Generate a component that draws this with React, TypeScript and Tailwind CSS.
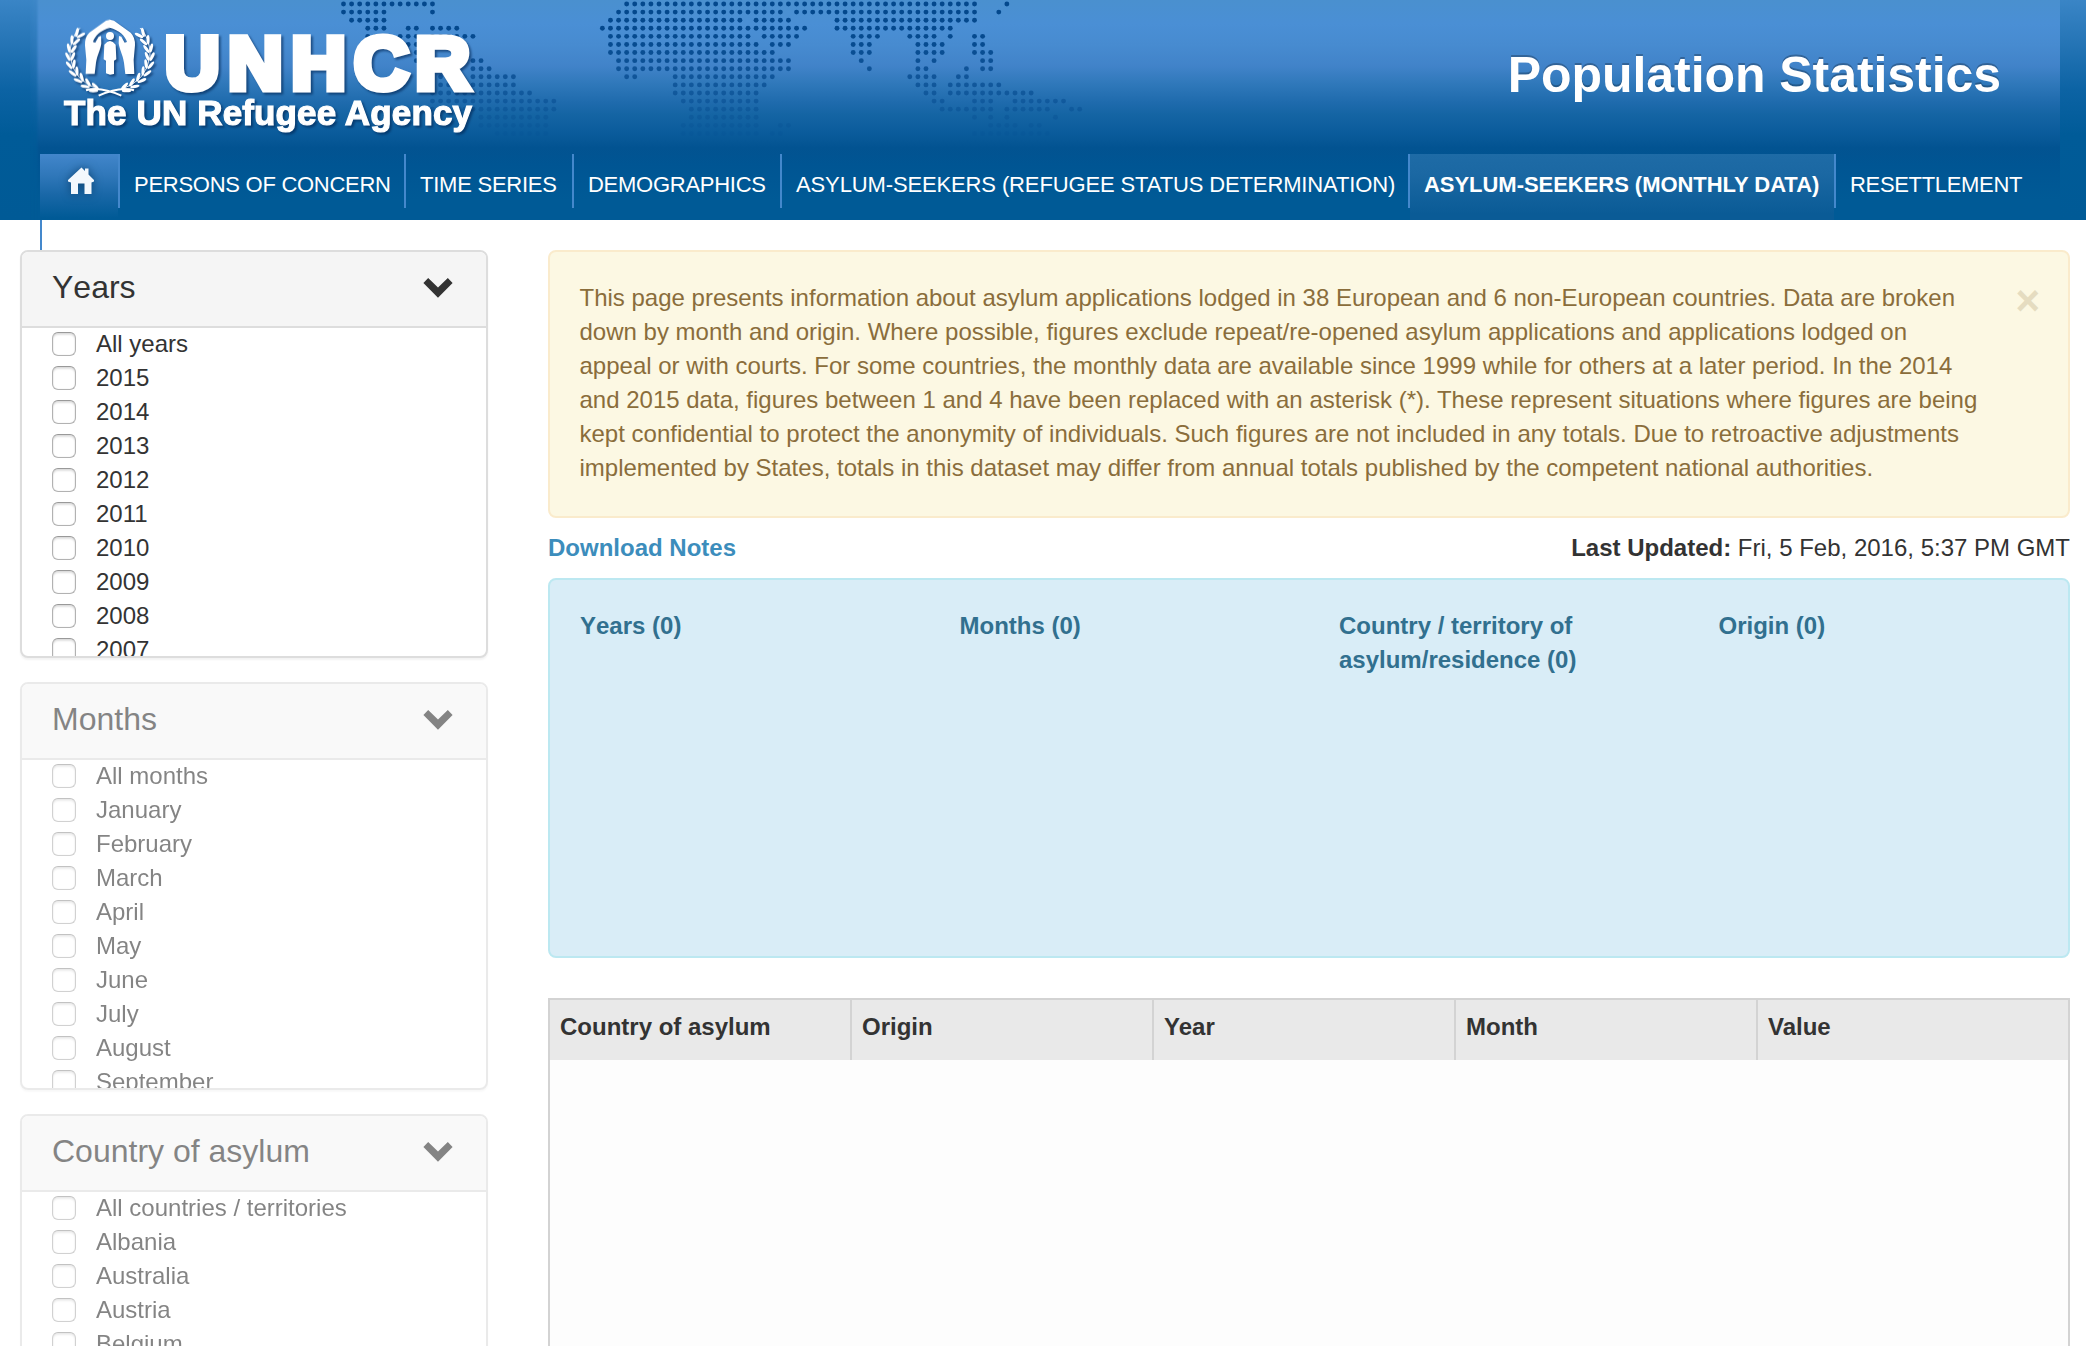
import React from "react";

const MAP_ROWS: number[][][] = [
  [[0, 11], [35, 78], [82, 82]],
  [[0, 5], [11, 11], [34, 54], [56, 78], [81, 81]],
  [[1, 5], [33, 49], [51, 55], [61, 78]],
  [[3, 5], [8, 9], [11, 14], [32, 57], [61, 75]],
  [[3, 4], [7, 9], [11, 16], [33, 50], [52, 56], [63, 66], [70, 73], [75, 75], [78, 79]],
  [[8, 9], [33, 51], [53, 55], [63, 65], [71, 74], [78, 79]],
  [[9, 9], [33, 53], [63, 65], [71, 74], [78, 80]],
  [[9, 9], [16, 17], [34, 55], [64, 64], [71, 71], [73, 73], [79, 80]],
  [[16, 18], [34, 55], [65, 65], [71, 72], [77, 77], [79, 80]],
  [[12, 13], [16, 21], [35, 36], [41, 53], [70, 73], [76, 77]],
  [[12, 13], [15, 21], [41, 52], [71, 73], [75, 81]],
  [[11, 23], [41, 51], [72, 73], [75, 85]],
  [[11, 26], [42, 51], [73, 74], [78, 80], [83, 89]],
  [[11, 26], [43, 51], [74, 80], [82, 87], [90, 91]],
  [[17, 25], [43, 51], [78, 78], [80, 80], [82, 82], [88, 88]],
  [[17, 25], [42, 51], [54, 55], [80, 83], [85, 86]],
  [[19, 25], [42, 51], [53, 54], [78, 87]],
];

const ROW_OPACITY = [0.95, 0.95, 0.95, 0.95, 0.92, 0.9, 0.86, 0.82, 0.76, 0.7, 0.62, 0.55, 0.45, 0.36, 0.26, 0.18, 0.1];

function DotMap() {
  return (
    <svg className="absolute left-0 top-0" width="1200" height="150" viewBox="0 0 1200 150">
      {MAP_ROWS.map((ranges, r) => (
        <g key={r} fill="#00458a" opacity={ROW_OPACITY[r]}>
          {ranges.flatMap(([a, b]) =>
            Array.from({ length: b - a + 1 }, (_, i) => (
              <circle key={a + i} cx={343.5 + 8.09 * (a + i)} cy={4 + 8.09 * r} r="2.45" />
            ))
          )}
        </g>
      ))}
    </svg>
  );
}

function Branch() {
  const leaves = Array.from({ length: 9 }, (_, i) => {
    const deg = 112 + i * 13.2;
    const a = (deg * Math.PI) / 180;
    return { x: 180 + 119 * Math.cos(a), y: 138 + 106 * Math.sin(a), rot: deg + 90 };
  });
  return (
    <g>
      <path d="M146 238 Q72 214 60 140 Q58 84 90 54" fill="none" stroke="#fff" strokeWidth="2.5" />
      {leaves.map((l, i) => (
        <g key={i} transform={`translate(${l.x} ${l.y}) rotate(${l.rot})`}>
          <ellipse cx="5" cy="-6" rx="14" ry="4.6" transform="rotate(-24)" />
          <ellipse cx="5" cy="6" rx="14" ry="4.6" transform="rotate(24)" />
        </g>
      ))}
    </g>
  );
}

function Hand() {
  return (
    <path d="M181 29 L168 32 L118 68 Q104 82 105 106 L109 150 L107 192 L134 192 L138 158 C142 134 151 120 154 100 L153 78 L146 80 L136 98 L129 96 C134 78 152 60 181 53 Z" />
  );
}

function Logo() {
  return (
    <svg className="absolute left-0 top-0" width="500" height="150" viewBox="0 0 500 150">
      <g style={{ filter: "drop-shadow(2px 2px 1px rgba(0,35,80,0.6))" }} fill="#fff">
        <g transform="translate(50 10) scale(0.3333)">
          <Branch />
          <g transform="translate(360 0) scale(-1 1)">
            <Branch />
          </g>
          <Hand />
          <g transform="translate(360 0) scale(-1 1)">
            <Hand />
          </g>
          <circle cx="180" cy="78" r="12" />
          <path d="M163 104 Q180 82 197 104 L199 148 L192 152 L192 192 L180 194 L168 190 L168 152 L161 148 Z" />
          <path d="M108 241 Q150 228 214 257 M252 241 Q210 228 146 257" fill="none" stroke="#fff" strokeWidth="6" />
        </g>
        <text
          transform="translate(165 88.5) scale(1.01 1)"
          x="0 62.4 125 187.1 247.7"
          fontFamily="Liberation Sans, Arial, sans-serif"
          fontWeight="700"
          fontSize="75"
          stroke="#fff"
          strokeWidth="7"
        >
          UNHCR
        </text>
        <text
          x="64"
          y="125"
          fontFamily="Liberation Sans, Arial, sans-serif"
          fontWeight="700"
          fontSize="35"
          stroke="#fff"
          strokeWidth="1.2"
          textLength="408"
        >
          The UN Refugee Agency
        </text>
      </g>
    </svg>
  );
}

function HomeIcon() {
  return (
    <svg className="drop-shadow-[0_0_5px_rgba(0,50,90,0.7)]" width="26" height="28" viewBox="0 0 26 28" fill="#f3f8fd">
      <path d="M13.5 0.5 L17 4 V1.5 H20.5 V7.5 L26 13 V14.5 L23.5 15.5 V27 H16.5 V16.5 H10 V27 H3 V15.5 L0 14.5 V13 Z" />
    </svg>
  );
}

const NAV = [
  { label: "PERSONS OF CONCERN", cls: "w-[286px] border-r-2 tracking-[-0.27px]" },
  { label: "TIME SERIES", cls: "w-[168px] border-r-2 tracking-[-0.24px]" },
  { label: "DEMOGRAPHICS", cls: "w-[208px] border-r-2 tracking-[-0.27px]" },
  { label: "ASYLUM-SEEKERS (REFUGEE STATUS DETERMINATION)", cls: "w-[628px] border-r-2 tracking-[-0.13px]" },
  { label: "ASYLUM-SEEKERS (MONTHLY DATA)", cls: "w-[426px] border-r-2 font-bold tracking-[-0.04px]", active: true },
  { label: "RESETTLEMENT", cls: "w-[200px] tracking-[-0.33px]" },
];

function Header() {
  return (
    <header className="relative h-[220px] shrink-0 bg-[linear-gradient(180deg,#3a85c6_0px,#2474b5_45px,#0c63a4_90px,#005b98_135px,#005a96_220px)] pl-[30px] pr-[26px]">
      <div className="h-full bg-[linear-gradient(180deg,#4a90cf_0px,#4a8fd5_24px,#478bd0_45px,#4183c9_66px,#2f78ba_84px,#1f6bad_102px,#1565a4_114px,#0b5c9c_132px,#025391_148px,#005593_164px,#005a96_200px)] [mask-image:linear-gradient(90deg,rgba(0,0,0,0.1)_0px,rgba(0,0,0,0.25)_6px,#000_9px)]" />
      <DotMap />
      <Logo />
      <h1 className="absolute right-[85px] top-[45px] text-[50px] leading-[60px] font-bold tracking-[-0.06px] whitespace-nowrap text-white [text-shadow:0_-2px_0_rgba(0,0,0,0.25)]">
        Population Statistics
      </h1>
      <nav className="absolute left-[40px] top-[154px] flex h-[66px] text-[22px] text-white">
        <a className="flex h-[66px] w-[80px] bg-[linear-gradient(180deg,#4286cb_0px,#2f77b9_22px,#1a68a8_40px,#005a96_64px)] bg-[length:78px_66px] bg-no-repeat">
          <span className="flex h-[54px] w-full items-center justify-center border-r-2 border-[#4488cc] pl-1">
            <HomeIcon />
          </span>
        </a>
        {NAV.map((n) => (
          <a
            key={n.label}
            className={
              n.active
                ? "h-[66px] bg-[linear-gradient(180deg,#1e6ba6_0px,#1b68a3_20px,#0a5b96_60px)] bg-[length:424px_66px] bg-no-repeat"
                : "h-[66px]"
            }
          >
            <span className={"flex h-[54px] items-center border-[#4488cc] pl-[14px] pt-[7px] whitespace-nowrap " + n.cls}>
              {n.label}
            </span>
          </a>
        ))}
      </nav>
      <div className="absolute left-[40px] top-[220px] h-[30px] w-[2px] bg-[#4488cc]" />
    </header>
  );
}

function Panel({ title, items, muted }: { title: string; items: string[]; muted?: boolean }) {
  return (
    <section
      className={
        "flex h-[408px] shrink-0 flex-col overflow-hidden rounded-lg border-2 border-[#ddd] bg-white shadow-[0_2px_2px_rgba(0,0,0,0.05)] " +
        (muted ? "opacity-60" : "")
      }
    >
      <div className="flex h-[76px] shrink-0 items-center justify-between border-b-2 border-[#ddd] bg-[#f5f5f5] pl-[30px] pr-[33px]">
        <h2 className="pb-1 text-[32px] leading-[36px] [font-kerning:none]">{title}</h2>
        <svg width="30" height="20" viewBox="0 0 30 20" fill="#333" className="-mt-0.5">
          <path d="M5.2 0 L15 9.6 L24.8 0 L29.6 4.9 L15 19.8 L0.4 4.9 Z" />
        </svg>
      </div>
      <ul className="-mt-px">
        {items.map((t) => (
          <li key={t} className="flex h-[34px] items-center gap-5 pl-[30px] leading-[34px]">
            <input
              type="checkbox"
              readOnly
              className="size-6 shrink-0 appearance-none rounded-[6px] border border-[#b2b2b2] border-t-[#999] bg-white shadow-[inset_0_2px_2px_rgba(0,0,0,0.12),inset_0_0_1px_rgba(0,0,0,0.2)]"
            />
            <span>{t}</span>
          </li>
        ))}
      </ul>
    </section>
  );
}

const YEARS = ["All years", "2015", "2014", "2013", "2012", "2011", "2010", "2009", "2008", "2007"];
const MONTHS = ["All months", "January", "February", "March", "April", "May", "June", "July", "August", "September"];
const COUNTRIES = ["All countries / territories", "Albania", "Australia", "Austria", "Belgium"];

const NOTE = [
  "This page presents information about asylum applications lodged in 38 European and 6 non-European countries. Data are broken",
  "down by month and origin. Where possible, figures exclude repeat/re-opened asylum applications and applications lodged on",
  "appeal or with courts. For some countries, the monthly data are available since 1999 while for others at a later period. In the 2014",
  "and 2015 data, figures between 1 and 4 have been replaced with an asterisk (*). These represent situations where figures are being",
  "kept confidential to protect the anonymity of individuals. Such figures are not included in any totals. Due to retroactive adjustments",
  "implemented by States, totals in this dataset may differ from annual totals published by the competent national authorities.",
];

export default function App() {
  return (
    <div className="flex h-[1346px] w-[2086px] flex-col overflow-hidden bg-white font-['Liberation_Sans',Arial,sans-serif] text-[24px] text-[#333]">
      <Header />
      <div className="flex h-[1126px] items-start gap-[60px] pl-5 pr-4 pt-[30px]">
        <aside className="flex w-[468px] shrink-0 flex-col gap-6">
          <Panel title="Years" items={YEARS} />
          <Panel title="Months" items={MONTHS} muted />
          <Panel title="Country of asylum" items={COUNTRIES} muted />
        </aside>
        <main className="w-[1522px] shrink-0">
          <div className="flex h-[268px] justify-between rounded-lg border-2 border-[#faebcc] bg-[#fcf8e3] pl-[29.5px] pr-[28px] pt-[29px] text-[#8a6d3b]">
            <p className="leading-[34px]">
              {NOTE.map((l) => (
                <span key={l} className="block whitespace-nowrap">
                  {l}
                </span>
              ))}
            </p>
            <button className="h-[40px] text-[42px] leading-[40px] font-bold text-[#e5dcc0]">×</button>
          </div>
          <div className="flex h-[60px] justify-between pt-[13px] leading-[34px]">
            <a className="font-bold text-[#3c8dbc]">Download Notes</a>
            <p>
              <strong>Last Updated:</strong> Fri, 5 Feb, 2016, 5:37 PM GMT
            </p>
          </div>
          <div className="flex h-[380px] rounded-lg border-2 border-[#bce8f1] bg-[#d9edf7] pl-[30px] pt-[29px] leading-[34px] font-bold text-[#31708f]">
            <div className="w-[379.5px] shrink-0 [font-kerning:none]">Years (0)</div>
            <div className="w-[379.5px] shrink-0">Months (0)</div>
            <div className="w-[379.5px] shrink-0">
              Country / territory of
              <br />
              asylum/residence (0)
            </div>
            <div>Origin (0)</div>
          </div>
          <div className="mt-10 h-[400px] border-2 border-[#d3d3d3] bg-[#fdfdfd]">
            <div className="grid h-[60px] grid-cols-[302px_302px_302px_302px_1fr] bg-[#e9e9e9] leading-[54px] font-bold">
              <div className="border-r-2 border-[#d3d3d3] pl-[10px]">Country of asylum</div>
              <div className="border-r-2 border-[#d3d3d3] pl-[10px]">Origin</div>
              <div className="border-r-2 border-[#d3d3d3] pl-[10px]">Year</div>
              <div className="border-r-2 border-[#d3d3d3] pl-[10px]">Month</div>
              <div className="pl-[10px]">Value</div>
            </div>
          </div>
        </main>
      </div>
    </div>
  );
}
